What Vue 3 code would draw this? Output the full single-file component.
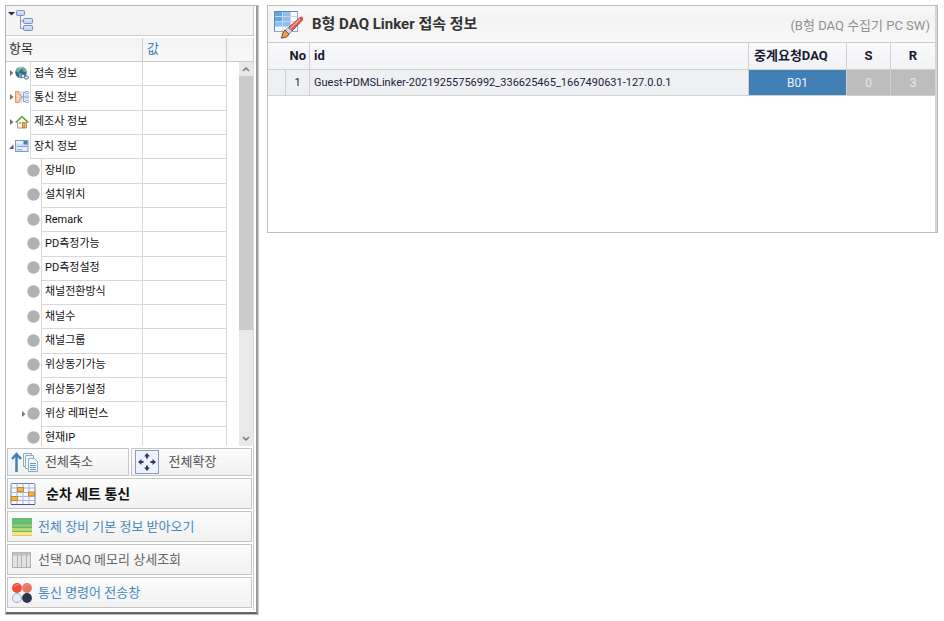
<script setup>
import { ref } from 'vue'

const rows = [
  { label: '접속 정보', level: 0, icon: 'globe', arrow: 'closed' },
  { label: '통신 정보', level: 0, icon: 'comm', arrow: 'closed' },
  { label: '제조사 정보', level: 0, icon: 'home', arrow: 'closed' },
  { label: '장치 정보', level: 0, icon: 'device', arrow: 'open' },
  { label: '장비ID', level: 1 },
  { label: '설치위치', level: 1 },
  { label: 'Remark', level: 1 },
  { label: 'PD측정가능', level: 1 },
  { label: 'PD측정설정', level: 1 },
  { label: '채널전환방식', level: 1 },
  { label: '채널수', level: 1 },
  { label: '채널그룹', level: 1 },
  { label: '위상동기가능', level: 1 },
  { label: '위상동기설정', level: 1 },
  { label: '위상 레퍼런스', level: 1, arrow: 'closed' },
  { label: '현재IP', level: 1 }
]

const links = ref([
  { no: 1, id: 'Guest-PDMSLinker-20219255756992_336625465_1667490631-127.0.0.1', daq: 'B01', s: 0, r: 3 }
])
</script>

<template>
  <main class="page">
    <aside class="side">
      <div class="side-body">
        <div class="toolbar">
          <button class="tree-menu" type="button" aria-label="트리 메뉴">
            <svg width="28" height="24" viewBox="0 0 28 24">
              <path d="M0 3h7L3.500 6.500z" fill="#25294f" />
              <path d="M12.500 7v12.500h4M12.500 12h4" fill="none" stroke="#8791aa" />
              <g fill="#c5d4f1" stroke="#7c8db8">
                <rect x="8.500" y="1.500" width="8" height="5" rx="1" />
                <rect x="15.500" y="9.500" width="9" height="5" rx="1" />
                <rect x="15.500" y="16.500" width="9" height="5" rx="1" />
              </g>
              <path d="M10 3h5M17 11h6M17 18h6" stroke="#eef4ff" />
            </svg>
          </button>
        </div>
        <div class="tree-head">
          <span class="h-item">항목</span><span class="h-value">값</span><span class="h-rest"></span>
        </div>
        <div class="tree-view">
          <table class="tree">
            <colgroup><col class="c-icon"><col class="c-indent"><col class="c-label"><col class="c-value"></colgroup>
            <tbody>
              <tr v-for="row in rows" :key="row.label">
                <td :colspan="row.level + 1" class="glyphs">
                  <div class="glyph-row">
                    <svg width="6" height="8" viewBox="0 0 6 8">
                      <path v-if="row.arrow === 'closed'" d="M2 1l3.500 3L2 7z" fill="#777" />
                      <path v-if="row.arrow === 'open'" d="M5.500 2.500v4.500h-4.500z" fill="#555" />
                    </svg>
                    <svg v-if="row.icon === 'globe'" width="14" height="14" viewBox="0 0 14 14">
                      <circle cx="6" cy="6.500" r="5.800" fill="#2f6f9f" />
                      <path d="M1 5c0-2 2-4 4-4l2 1-1 2-2 1v2zM8 1.500l3 2 .5 3-3-1-1-2zM4 7l3 1-1 4-2-1z" fill="#6fb587" />
                      <path d="M3 2.500c2-1.500 4-1.500 5 0" stroke="#b8dced" fill="none" />
                      <g fill="#e3eaf2" stroke="#5b6f8d"><rect x="6" y="8.500" width="4" height="3" rx="1.500" /><rect x="9.500" y="10" width="4" height="3" rx="1.500" /></g>
                    </svg>
                    <svg v-else-if="row.icon === 'comm'" width="14" height="14" viewBox="0 0 14 14">
                      <rect x=".500" y="1" width="13.500" height="12" fill="#e3edf9" />
                      <path d="M.500 1.500h3l3.500 5.500-3 5.500h-3.500z" fill="#f6c3a0" stroke="#df9a6a" />
                      <path d="M2 4.500L4 7l-2 3" stroke="#fff1dd" fill="none" />
                      <path d="M6 7h3M8.500 2.500v9M8.500 2.500h2M8.500 7h2M8.500 11.500h2" stroke="#84a7d6" fill="none" />
                      <g fill="#f5faff" stroke="#7ea3d3"><rect x="10.500" y="1.500" width="3" height="2" rx="1" /><rect x="10.500" y="6" width="3" height="2" rx="1" /><rect x="10.500" y="10.500" width="3" height="2" rx="1" /></g>
                    </svg>
                    <svg v-else-if="row.icon === 'home'" width="14" height="14" viewBox="0 0 14 14">
                      <path d="M2.500 6.500v6.500h9V6.500L7 2z" fill="#fdfae9" stroke="#a99a6c" />
                      <path d="M.700 7.500L7 1.500l6.300 6" fill="none" stroke="#62a348" stroke-width="1.600" />
                      <rect x="4" y="7" width="2" height="2" fill="#8bb6df" /><rect x="7.500" y="7.500" width="2.500" height="5" fill="#f0ad4e" stroke="#c18036" />
                    </svg>
                    <svg v-else-if="row.icon === 'device'" width="14" height="14" viewBox="0 0 14 14">
                      <rect x=".500" y="1.500" width="12.500" height="11" fill="#cfdff6" stroke="#7f9bcb" />
                      <path d="M1 3.500h7" stroke="#f3f7fe" stroke-width="2" /><rect x="8.500" y="2" width="4" height="3.500" fill="#477dc9" />
                      <path d="M2 7.500h10" stroke="#7c9dce" /><path d="M2 9h10M8 11h4" stroke="#fff" />
                      <path d="M2 10.500h5" stroke="#8fabd6" />
                    </svg>
                    <svg v-else width="13" height="13" viewBox="0 0 13 13"><circle cx="6.500" cy="6.500" r="6.200" fill="#b1b1b1" /></svg>
                  </div>
                </td>
                <td :colspan="2 - row.level" class="label">{{ row.label }}</td>
                <td class="value"></td>
              </tr>
            </tbody>
          </table>
          <div class="scroll">
            <div class="scroll-end"><svg width="8" height="6" viewBox="0 0 8 6"><path d="M1 5l3-3 3 3" fill="none" stroke="#777" stroke-width="1.500" /></svg></div>
            <div class="thumb"></div>
            <div class="scroll-end last"><svg width="8" height="6" viewBox="0 0 8 6"><path d="M1 1l3 3 3-3" fill="none" stroke="#777" stroke-width="1.500" /></svg></div>
          </div>
        </div>
        <div class="actions">
          <div class="pair">
            <button type="button" class="btn half">
              <svg width="28" height="22" viewBox="0 0 28 22">
                <path d="M5.500 21V4M1 8l4.500-5L10 8" fill="none" stroke="#3f7fb9" stroke-width="2.500" />
                <g fill="#f3f8fb" stroke="#8eaabd"><path d="M12.500 2.500h8v13h-8z" /><path d="M14.500 4.500h8v13h-8z" /><path d="M17.500 7.500h6l3 3v10h-9z" /></g>
                <path d="M19 12.500h6M19 14.500h6M19 16.500h6M19 18.500h6" stroke="#5b9bc8" />
              </svg>
              <span>전체축소</span>
            </button>
            <button type="button" class="btn half">
              <svg width="24" height="24" viewBox="0 0 24 24">
                <rect x=".500" y=".500" width="23" height="23" fill="#edf2fc" stroke="#8e9cc2" />
                <path d="M12 3l3 3.500h-2v2h-2v-2H9zM12 21l3-3.500h-2v-2h-2v2H9zM3 12l3.500-3v2h2v2h-2v2zM21 12l-3.500-3v2h-2v2h2v2z" fill="#303963" />
              </svg>
              <span>전체확장</span>
            </button>
          </div>
          <button type="button" class="btn strong">
            <svg width="26" height="24" viewBox="0 0 26 24">
              <rect x="1" y="1.500" width="24" height="21" rx="1" fill="#f7f9ff" stroke="#7482b0" />
              <path d="M7 2v20M13 2v20M19 2v20M1 6h24M1 10.500h24M1 14.500h24M1 18.500h24" stroke="#a9b7d8" />
              <g fill="#f3b64b" stroke="#cc8428"><rect x="7.500" y="5.500" width="6" height="4" /><rect x="18.500" y="10" width="6" height="4" /><rect x="1.500" y="14.500" width="6" height="4" /></g>
              <path d="M1 22.500h24" stroke="#465993" />
            </svg>
            <span>순차 세트 통신</span>
          </button>
          <button type="button" class="btn blue">
            <svg width="20" height="20" viewBox="0 0 20 20">
              <path d="M0 1h20v5H0z" fill="#65bf76" /><path d="M0 6h20v4H0z" fill="#83ca79" /><path d="M0 10h20v5H0z" fill="#b2d778" /><path d="M0 15h20v4H0z" fill="#f6e681" />
              <path d="M0 6.500h20M0 10.500h20M0 14.500h20" stroke="#73b06a" /><path d="M0 18.500h20" stroke="#ddc966" />
            </svg>
            <span>전체 장비 기본 정보 받아오기</span>
          </button>
          <button type="button" class="btn gray">
            <svg width="20" height="20" viewBox="0 0 20 20">
              <rect x=".500" y="2.500" width="18" height="15" fill="#e2e2e2" stroke="#b0b0b0" /><path d="M1 4h17" stroke="#c2c2c2" stroke-width="3" />
              <path d="M5.500 3v14M9.500 3v14M14.500 3v14" stroke="#b3b3b3" />
            </svg>
            <span>선택 DAQ 메모리 상세조회</span>
          </button>
          <button type="button" class="btn blue">
            <svg width="20" height="20" viewBox="0 0 20 20">
              <circle cx="5" cy="5" r="4.900" fill="#ee4c35" /><circle cx="15" cy="5" r="4.900" fill="#ea7465" />
              <circle cx="5" cy="15" r="4.500" fill="#e7effb" stroke="#9aaed0" /><circle cx="15" cy="15" r="4.900" fill="#2c3450" />
              <path d="M2 4c1-2 3-3 5-2M12 4c1-2 3-3 5-2" stroke="#ff9c86" fill="none" />
            </svg>
            <span>통신 명령어 전송창</span>
          </button>
        </div>
      </div>
    </aside>

    <section class="panel">
      <header class="panel-head">
        <svg width="30" height="30" viewBox="0 0 30 30">
          <rect x="1.500" y="2.500" width="23" height="20" fill="#f8fbff" stroke="#8fa9d4" />
          <path d="M2 3h15v14H2z" fill="#8dbfea" /><path d="M2 3h8v9H2z" fill="#64a5df" />
          <path d="M9.500 3v19M17.500 3v19M2 7.500h22M2 12.500h22M2 17.500h22" stroke="#c0d8f2" />
          <path d="M1.500 22V2.500h23" fill="none" stroke="#5b87c2" />
          <path d="M27 8.500c2-1 3.500.5 2.500 2.500L19 22l-4-3z" fill="#dd5a50" stroke="#b8443e" />
          <path d="M27 10L17.500 19.500" stroke="#f5a59a" stroke-width="1.500" />
          <path d="M15 18.500l4 3.500-3 3-4-3.500z" fill="#d4dae5" stroke="#8795ac" />
          <path d="M12 21l4 4c-1 3-4 4-8 4 2-2 1-6 4-8z" fill="#e6a14c" stroke="#7d4c30" />
        </svg>
        <h1>B형 DAQ Linker 접속 정보</h1>
        <span class="note">(B형 DAQ 수집기 PC SW)</span>
      </header>
      <table class="grid">
        <colgroup><col class="g-mark"><col class="g-no"><col><col class="g-daq"><col class="g-num"><col class="g-num"></colgroup>
        <thead>
          <tr><th colspan="2" class="no">No</th><th class="id">id</th><th class="h-daq">중계요청DAQ</th><th>S</th><th>R</th></tr>
        </thead>
        <tbody>
          <tr v-for="link in links" :key="link.no">
            <td></td><td>{{ link.no }}</td><td class="id">{{ link.id }}</td>
            <td class="daq">{{ link.daq }}</td><td class="off">{{ link.s }}</td><td class="off">{{ link.r }}</td>
          </tr>
        </tbody>
      </table>
    </section>
  </main>
</template>

<style>
body { margin: 0; background: #fff; }
</style>

<style scoped>
* { box-sizing: border-box; }
svg { display: block; flex: none; }
table { border-collapse: separate; border-spacing: 0; table-layout: fixed; }
.page {
  display: flex; align-items: flex-start; gap: 8px; padding: 5px 6px 6px 5px;
  font-family: Roboto, "Noto Sans CJK KR", sans-serif; font-size: 11px; color: #111;
}
button { font: inherit; margin: 0; }
.side {
  flex: 0 0 254px; border: 1px solid #b9b9b9; border-right-color: #d0d0d0;
  border-bottom: 1px solid #bbb;
}
.side-body { border-right: 2px solid #999; border-bottom: 2px solid #666; padding: 0 2px 2px 0; }
.toolbar { height: 30px; background: #f4f4f4; border-bottom: 1px solid #c9c9c9; border-right: 1px solid #ccc; }
.tree-menu { display: block; border: 0; padding: 3px 2px; background: none; }
.tree-head {
  display: flex; margin-top: 2px; height: 24px; line-height: 22px; font-size: 13px; color: #333;
  background: linear-gradient(#f3f3f3, #f8f8f8); border-bottom: 1px solid #ccc; border-right: 1px solid #ccc;
}
.h-item { flex: 0 0 137px; padding-left: 3px; border-right: 1px solid #ccc; }
.h-value { flex: 0 0 84px; padding-left: 4px; border-right: 1px solid #ccc; color: #3b7fb8; }
.h-rest { flex: 1; }
.tree-view { display: flex; justify-content: space-between; height: 384px; overflow: hidden; border-right: 1px solid #ddd; }
.tree { width: 221px; height: 389px; }
.c-icon { width: 24px; }
.c-indent { width: 11px; }
.c-value { width: 84px; }
.tree td { padding: 0; line-height: 16px; }
.glyph-row { display: flex; align-items: center; justify-content: flex-end; gap: 1px; padding: 0 1px 2px 0; }
.tree .label { padding-left: 3px; border-left: 1px solid #d8d8d8; border-right: 1px solid #d8d8d8; border-bottom: 1px solid #d8d8d8; white-space: nowrap; }
.value { border-right: 1px solid #d8d8d8; border-bottom: 1px solid #d8d8d8; }
.scroll { width: 14px; background: #e9e9e9; display: flex; flex-direction: column; }
.scroll-end { height: 14px; display: flex; align-items: center; justify-content: center; }
.last { margin-top: auto; }
.thumb { height: 254px; background: #cbcbcb; }
.actions { display: flex; flex-direction: column; gap: 2px; padding: 2px 1px; border-right: 1px solid #ccc; }
.pair { display: flex; gap: 2px; }
.btn {
  display: flex; align-items: center; gap: 6px; height: 31px; padding: 0 4px; text-align: left;
  border: 1px solid #c6c6c6; border-radius: 0; background: linear-gradient(#fcfcfc, #f1f1f1);
  font-size: 13px; line-height: 20px; white-space: nowrap;
}
.half { flex: 1; height: 28px; padding: 0 3px; color: #555; }
.half + .half { gap: 10px; }
.strong { gap: 10px; padding: 0 2px; font-size: 14px; font-weight: 700; color: #111; }
.blue { color: #4b89bd; }
.gray { color: #666; }
.panel { flex: 1; min-width: 0; min-height: 228px; border: 1px solid #bdbdbd; box-shadow: inset -2px 0 #d4d4d4; padding-right: 2px; }
.panel-head {
  display: flex; align-items: center; gap: 9px; height: 37px; padding: 0 5px;
  background: linear-gradient(#fafafa, #f3f3f3 30%, #f8f8f8); border-bottom: 1px solid #ccc;
}
h1 { margin: 0; font-size: 15px; line-height: 20px; font-weight: 700; color: #333; }
.note { margin-left: auto; font-size: 13px; color: #909090; }
.grid { width: 100%; color: #222238; font-size: 11px; }
.g-mark { width: 18px; }
.g-no { width: 24px; }
.g-daq { width: 98px; }
.g-num { width: 44px; }
.grid th, .grid td { padding: 0; text-align: center; border-right: 1px solid #d0d0d4; border-bottom: 1px solid #d0d0d0; }
.grid th:last-child, .grid td:last-child { border-right: 0; }
.grid th { height: 27px; font-size: 13px; line-height: 16px; background: linear-gradient(#fafafa, #f1f2f6); color: #191932; }
.grid td { height: 26px; background: #eff0f3; }
.grid .no { text-align: right; padding-right: 3px; }
.grid .id { text-align: left; padding-left: 4px; }
.grid .h-daq { text-align: left; padding-left: 5px; }
.grid .daq { background: #427fb4; color: #e8f2fb; font-size: 12px; }
.grid .off { background: #bdbdbd; color: #e8e8e8; font-size: 12px; }
</style>
